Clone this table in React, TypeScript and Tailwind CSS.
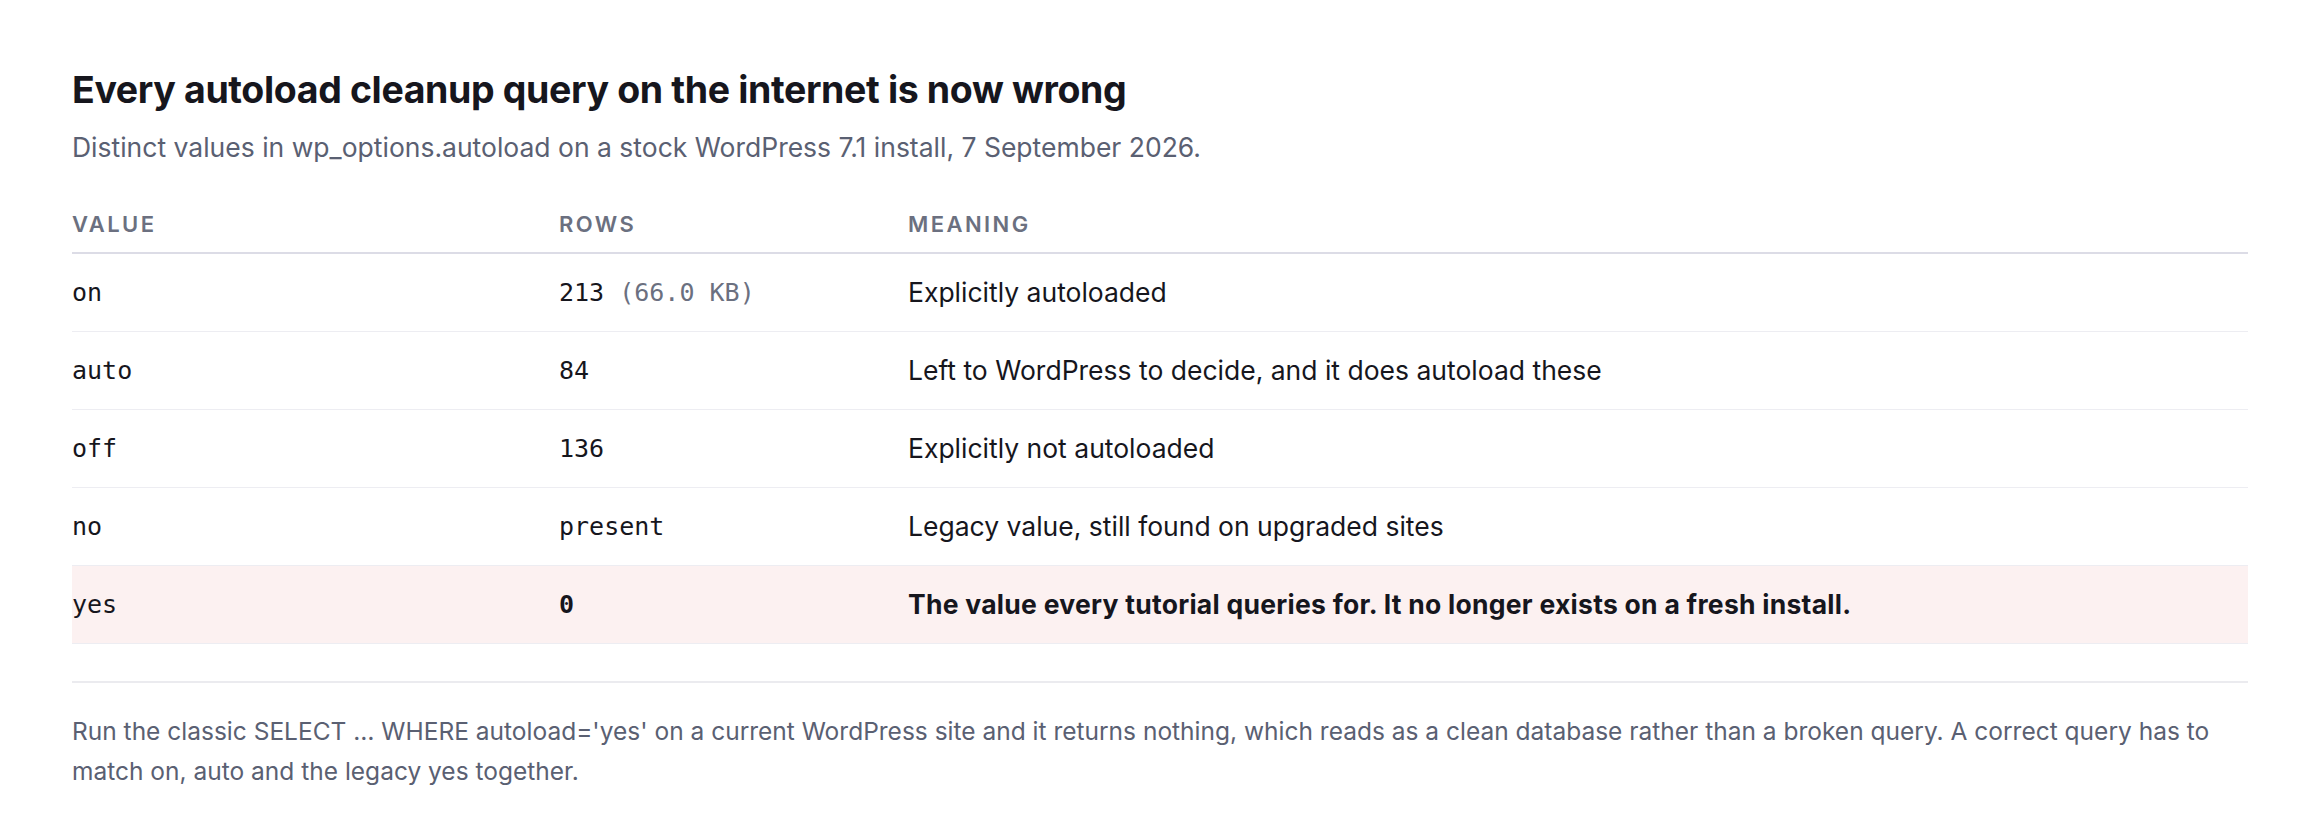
import React from 'react';

type Row = {
  value: string;
  rows: string;
  extra?: string;
  meaning: string;
  highlight?: boolean;
};

const rows: Row[] = [
  { value: 'on', rows: '213', extra: '(66.0 KB)', meaning: 'Explicitly autoloaded' },
  { value: 'auto', rows: '84', meaning: 'Left to WordPress to decide, and it does autoload these' },
  { value: 'off', rows: '136', meaning: 'Explicitly not autoloaded' },
  { value: 'no', rows: 'present', meaning: 'Legacy value, still found on upgraded sites' },
  {
    value: 'yes',
    rows: '0',
    meaning: 'The value every tutorial queries for. It no longer exists on a fresh install.',
    highlight: true,
  },
];

const mono = "font-['DejaVu_Sans_Mono',Menlo,monospace]";

const App = () => {
  return (
    <div className="min-h-screen bg-white font-['Inter','Noto_Sans',sans-serif] px-[72px] pt-[67px] pb-10">
      <h1 className="text-[37.5px] leading-[46px] font-bold tracking-[-0.01em] text-[#16161d]">
        Every autoload cleanup query on the internet is now wrong
      </h1>
      <p className="mt-[15px] text-[26.5px] leading-[38px] text-[#5a6072]">
        Distinct values in wp_options.autoload on a stock WordPress 7.1 install, 7 September 2026.
      </p>

      <div className="mt-[42px]">
        <div className="grid grid-cols-[487px_349px_1fr] border-b-2 border-[#dcdce6] pb-[12px] text-[22px] leading-[32px] font-semibold tracking-[0.11em] uppercase text-[#6b7080]">
          <div>Value</div>
          <div>Rows</div>
          <div>Meaning</div>
        </div>

        {rows.map((r) => (
          <div
            key={r.value}
            className={`grid grid-cols-[487px_349px_1fr] items-center border-b border-[#ededf2] py-[19px] text-[26.5px] leading-[39px] text-[#16161d] ${
              r.highlight ? 'bg-[#fcf1f1]' : ''
            }`}
          >
            <div className={`${mono} text-[25px]`}>{r.value}</div>
            <div className={`${mono} text-[25px] ${r.highlight ? 'font-bold' : ''}`}>
              {r.rows}
              {r.extra && <span className="text-[#6b7080]"> {r.extra}</span>}
            </div>
            <div className={r.highlight ? 'font-bold tracking-[0.01em]' : ''}>{r.meaning}</div>
          </div>
        ))}
      </div>

      <div className="mt-[37px] border-t-2 border-[#ebebef] pt-[28px]">
        <p className="text-[24.5px] leading-[40px] text-[#5a6072]">
          Run the classic SELECT … WHERE autoload='yes' on a current WordPress site and it returns nothing, which reads as a
          clean database rather than a broken query. A correct query has to match on, auto and the legacy yes together.
        </p>
      </div>
    </div>
  );
};

export default App;
